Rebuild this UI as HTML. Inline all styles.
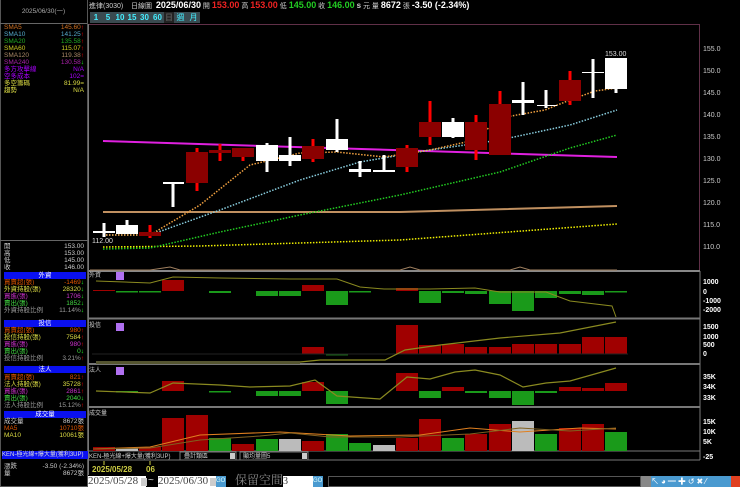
<!DOCTYPE html>
<html><head><meta charset="utf-8"><style>
*{margin:0;padding:0;box-sizing:border-box}
body{width:740px;height:487px;background:#000;overflow:hidden;position:relative;font-family:"Liberation Sans","Noto Sans CJK TC",sans-serif;color:#ccc}
.a{position:absolute;white-space:nowrap}
.r{position:absolute;left:4px;width:82px;height:7px;font-size:6.5px;line-height:7px}
.r span{position:absolute;right:2px}
.h{position:absolute;left:4px;width:82px;height:7px;background:#0a10f0;color:#fff;font-size:6.5px;line-height:7px;text-align:center}
.btn{position:absolute;top:12px;height:11px;background:#3a4a50;color:#4ef;font-size:8px;line-height:11px;text-align:center;font-weight:bold}
.s{font-family:"Liberation Serif","Noto Serif CJK SC",serif}
</style></head><body>
<div class="a" style="left:0;top:0;width:88px;height:487px;border:1px solid #555;border-top:none"></div>
<div class="a" style="left:0;top:0;width:87px;height:24px;border-bottom:1px solid #666;font-size:6.5px;color:#aaa;line-height:24px;text-align:center">2025/06/30(一)</div>
<div class="r" style="top:24px;color:#d07020">SMA5<span>145.60<b style="color:#f00">↑</b></span></div>
<div class="r" style="top:31px;color:#5ac">SMA10<span>141.25<b style="color:#f00">↑</b></span></div>
<div class="r" style="top:38px;color:#2a2">SMA20<span>135.58<b style="color:#f00">↑</b></span></div>
<div class="r" style="top:45px;color:#cc2">SMA60<span>115.07<b style="color:#f00">↑</b></span></div>
<div class="r" style="top:52px;color:#a86">SMA120<span>119.38<b style="color:#f00">↑</b></span></div>
<div class="r" style="top:59px;color:#a2a">SMA240<span>130.58<b style="color:#2f2">↓</b></span></div>
<div class="r" style="top:66px;color:#a0f">多方攻擊線<span>N/A</span></div>
<div class="r" style="top:73px;color:#a0f">空多成本<span>102=</span></div>
<div class="r" style="top:80px;color:#dd4">多空籌碼<span>81.99=</span></div>
<div class="r" style="top:87px;color:#dd4">趨勢<span>N/A</span></div>
<div class="a" style="left:0;top:240px;width:88px;border-top:1px solid #666"></div>
<div class="r" style="top:243px">開<span>153.00</span></div>
<div class="r" style="top:250px">高<span>153.00</span></div>
<div class="r" style="top:257px">低<span>145.00</span></div>
<div class="r" style="top:264px">收<span>146.00</span></div>
<div class="h" style="top:272px">外資</div>
<div class="r" style="top:279px;color:#d50">買賣超(張)<span>-1469<b style="color:#2f2">↓</b></span></div>
<div class="r" style="top:286px;color:#dd4">外資持股(張)<span>28320<b style="color:#2f2">↓</b></span></div>
<div class="r" style="top:293px;color:#c3c">買進(張)<span>1706<b style="color:#2f2">↓</b></span></div>
<div class="r" style="top:300px;color:#4d4">賣出(張)<span>1852<b style="color:#2f2">↓</b></span></div>
<div class="r" style="top:307px;color:#999">外資持股比例<span>11.14%<b style="color:#2f2">↓</b></span></div>
<div class="h" style="top:320px">投信</div>
<div class="r" style="top:327px;color:#d50">買賣超(張)<span>980<b style="color:#f00">↑</b></span></div>
<div class="r" style="top:334px;color:#dd4">投信持股(張)<span>7584<b style="color:#f00">↑</b></span></div>
<div class="r" style="top:341px;color:#c3c">買進(張)<span>980<b style="color:#f00">↑</b></span></div>
<div class="r" style="top:348px;color:#4d4">賣出(張)<span>0<b style="color:#2f2">↓</b></span></div>
<div class="r" style="top:355px;color:#999">投信持股比例<span>3.21%<b style="color:#f00">↑</b></span></div>
<div class="h" style="top:366px">法人</div>
<div class="r" style="top:374px;color:#d50">買賣超(張)<span>821<b style="color:#f00">↑</b></span></div>
<div class="r" style="top:381px;color:#dd4">法人持股(張)<span>35728<b style="color:#f00">↑</b></span></div>
<div class="r" style="top:388px;color:#c3c">買進(張)<span>2861<b style="color:#f00">↑</b></span></div>
<div class="r" style="top:395px;color:#4d4">賣出(張)<span>2040<b style="color:#2f2">↓</b></span></div>
<div class="r" style="top:402px;color:#999">法人持股比例<span>15.12%<b style="color:#f00">↑</b></span></div>
<div class="h" style="top:411px">成交量</div>
<div class="r" style="top:418px">成交量<span>8672張</span></div>
<div class="r" style="top:425px;color:#d50">MA5<span style="color:#d50">10710張</span></div>
<div class="r" style="top:432px;color:#dd4">MA10<span style="color:#dd4">10061張</span></div>
<div class="a" style="left:2px;top:451px;width:86px;height:8px;background:#0a10f0;color:#ddd;font-size:6px;line-height:8px">KEN-極光線+爆大量(獲利3UP)</div>
<div class="r" style="top:463px">漲跌<span>-3.50 (-2.34%)</span></div>
<div class="r" style="top:470px">量<span>8672張</span></div>
<div class="a" style="left:89px;top:1px;font-size:7px;line-height:9px;color:#ccc">進律(3030) &nbsp;&nbsp; 日線圖 &nbsp;<b style="font-size:9px;color:#fff">2025/06/30</b> 開 <b style="font-size:9px;color:#e22">153.00</b> 高 <b style="font-size:9px;color:#e22">153.00</b> 低 <b style="font-size:9px;color:#2c2">145.00</b> 收 <b style="font-size:9px;color:#2c2">146.00</b> <b style="font-size:8px">s</b> 元 量 <b style="font-size:9px;color:#fff">8672</b> 張 <b style="font-size:9px;color:#fff">-3.50 (-2.34%)</b></div>
<div class="btn" style="left:90px;width:12px">1</div>
<div class="btn" style="left:102px;width:12px">5</div>
<div class="btn" style="left:114px;width:12px">10</div>
<div class="btn" style="left:126px;width:12px">15</div>
<div class="btn" style="left:138px;width:13px">30</div>
<div class="btn" style="left:151px;width:13px">60</div>
<div class="btn" style="left:164px;width:10px;background:#222;color:#555">日</div>
<div class="btn" style="left:174px;width:13px;font-weight:normal">週</div>
<div class="btn" style="left:187px;width:13px;font-weight:normal">月</div>

<svg class="a" style="left:0;top:0" width="740" height="487" font-family="Liberation Sans" font-size="7">
<g stroke="#777" fill="none"><rect x="88.5" y="24.5" width="611" height="246" stroke="#603048"/>
<line x1="88" y1="271" x2="700" y2="271" stroke="#888" stroke-width="2"/>
<line x1="88" y1="318.5" x2="700" y2="318.5" stroke-width="2"/>
<line x1="88" y1="364" x2="700" y2="364" stroke-width="2"/>
<line x1="88" y1="407" x2="700" y2="407" stroke-width="2"/>
<line x1="88" y1="451" x2="700" y2="451"/><line x1="88" y1="460" x2="700" y2="460"/>
<line x1="88.5" y1="24" x2="88.5" y2="475"/><line x1="700" y1="271" x2="700" y2="460"/></g>
<g fill="#ccc" font-size="7"><text x="703" y="51">155.0</text><text x="703" y="73">150.0</text><text x="703" y="95">145.0</text><text x="703" y="117">140.0</text><text x="703" y="139">135.0</text><text x="703" y="161">130.0</text><text x="703" y="183">125.0</text><text x="703" y="205">120.0</text><text x="703" y="227">115.0</text><text x="703" y="249">110.0</text>
<g fill="#fff" font-weight="bold"><text x="703" y="284">1000</text><text x="703" y="294">0</text><text x="703" y="303">-1000</text><text x="703" y="312">-2000</text>
<text x="703" y="329">1500</text><text x="703" y="339">1000</text><text x="703" y="347">500</text><text x="703" y="356">0</text>
<text x="703" y="379">35K</text><text x="703" y="389">34K</text><text x="703" y="400">33K</text>
<text x="703" y="424">15K</text><text x="703" y="434">10K</text><text x="703" y="444">5K</text><text x="703" y="459">-25</text></g>
<text x="605" y="56" fill="#ddd">153.00</text><text x="92" y="243" fill="#ddd">112.00</text></g>
<polyline points="103,141 617,157" stroke="#e020e0" stroke-width="2" fill="none"/>
<polyline points="103,212 400,212 617,206" stroke="#c09060" stroke-width="2" fill="none"/>
<polyline points="103,247 200,246 400,240 617,224" stroke="#ee0" stroke-width="1.5" stroke-dasharray="1.5,1.5" fill="none"/>
<polyline points="103,249 150,248 220,232 300,215 400,195 500,172 570,148 617,135" stroke="#2c2" stroke-width="1.5" stroke-dasharray="1.5,1.5" fill="none"/>
<polyline points="103,235 150,235 220,210 300,180 360,162 430,150 500,140 570,125 617,110" stroke="#8cd" stroke-width="1.5" stroke-dasharray="1.5,1.5" fill="none"/>
<polyline points="103,235 150,235 200,205 250,165 300,153 337,152 384,157 430,150 475,140 500,118 545,110 570,100 595,91 617,88" stroke="#f0a040" stroke-width="1.5" stroke-dasharray="1.5,1.5" fill="none"/>
<g stroke-width="3">
<g stroke="#fff"><line x1="104" y1="223" x2="104" y2="237"/><line x1="127" y1="220" x2="127" y2="234"/><line x1="173" y1="183" x2="173" y2="207"/><line x1="267" y1="143" x2="267" y2="172"/><line x1="290" y1="137" x2="290" y2="166"/><line x1="337" y1="119" x2="337" y2="152"/><line x1="360" y1="161" x2="360" y2="177"/><line x1="384" y1="155" x2="384" y2="172"/><line x1="453" y1="118" x2="453" y2="138"/><line x1="523" y1="82" x2="523" y2="115"/><line x1="546" y1="90" x2="546" y2="108"/><line x1="593" y1="59" x2="593" y2="98"/><line x1="616" y1="58" x2="616" y2="93"/></g>
<g stroke="#f00"><line x1="150" y1="225" x2="150" y2="238"/><line x1="197" y1="148" x2="197" y2="191"/><line x1="220" y1="144" x2="220" y2="161"/><line x1="243" y1="148" x2="243" y2="161"/><line x1="313" y1="139" x2="313" y2="162"/><line x1="407" y1="145" x2="407" y2="172"/><line x1="430" y1="101" x2="430" y2="145"/><line x1="476" y1="115" x2="476" y2="160"/><line x1="500" y1="91" x2="500" y2="155"/><line x1="570" y1="71" x2="570" y2="105"/></g></g>
<g fill="#fff"><rect x="93" y="231" width="22" height="2"/><rect x="116" y="225" width="22" height="9"/><rect x="163" y="182" width="21" height="2"/><rect x="256" y="145" width="22" height="16"/><rect x="279" y="155" width="22" height="6"/><rect x="326" y="139" width="22" height="11"/><rect x="349" y="169" width="22" height="3"/><rect x="373" y="170" width="22" height="2"/><rect x="442" y="122" width="22" height="15"/><rect x="512" y="100" width="22" height="3"/><rect x="537" y="105" width="20" height="1"/><rect x="582" y="72" width="22" height="1"/><rect x="605" y="58" width="22" height="31"/></g>
<g fill="#8b0000"><rect x="139" y="232" width="22" height="4"/><rect x="186" y="152" width="22" height="31"/><rect x="209" y="150" width="22" height="3"/><rect x="232" y="148" width="22" height="9"/><rect x="302" y="146" width="22" height="13"/><rect x="396" y="148" width="22" height="19"/><rect x="419" y="122" width="22" height="15"/><rect x="465" y="122" width="22" height="28"/><rect x="489" y="104" width="22" height="51"/><rect x="559" y="80" width="22" height="21"/></g>
<polyline points="90,270 150,270 170,267 180,270 400,270 410,267 420,270 510,270 520,267 530,270 617,270" stroke="#a08060" fill="none"/>
<g fill="#1a9a1a"><rect x="116" y="291" width="22" height="1.5"/><rect x="139" y="291" width="22" height="1.5"/><rect x="209" y="291" width="22" height="2"/><rect x="256" y="291" width="22" height="5"/><rect x="279" y="291" width="22" height="5"/><rect x="326" y="291" width="22" height="14"/><rect x="349" y="291" width="22" height="1.5"/><rect x="419" y="291" width="22" height="12"/><rect x="442" y="291" width="22" height="2"/><rect x="465" y="291" width="22" height="3"/><rect x="489" y="291" width="22" height="13"/><rect x="512" y="291" width="22" height="20"/><rect x="535" y="291" width="22" height="7"/><rect x="559" y="291" width="22" height="3"/><rect x="582" y="291" width="22" height="4"/><rect x="605" y="291" width="22" height="1.5"/></g>
<g fill="#a00000"><rect x="93" y="290" width="22" height="1"/><rect x="162" y="280" width="22" height="11"/><rect x="302" y="285" width="22" height="6"/><rect x="396" y="288" width="22" height="3"/></g>
<polyline points="96,281 150,283 173,277 220,278 290,279 337,279 360,287 384,289 430,289 475,288 500,292 546,292 570,301 612,306 616,317" stroke="#8a8a20" fill="none"/>
<g fill="#a00000"><rect x="302" y="347" width="22" height="7"/><rect x="396" y="325" width="22" height="29"/><rect x="419" y="345" width="22" height="9"/><rect x="442" y="344" width="22" height="10"/><rect x="465" y="347" width="22" height="7"/><rect x="489" y="347" width="22" height="7"/><rect x="512" y="344" width="22" height="10"/><rect x="535" y="344" width="22" height="10"/><rect x="559" y="344" width="22" height="10"/><rect x="582" y="337" width="22" height="17"/><rect x="605" y="337" width="22" height="17"/></g>
<rect x="326" y="354" width="22" height="1.5" fill="#1a6a1a"/>
<line x1="92" y1="354" x2="628" y2="354" stroke="#222"/>
<polyline points="96,362 300,362 320,360 385,360 405,350 440,345 500,338 560,333 616,322" stroke="#8a8a20" stroke-width="1.2" fill="none"/>
<rect x="96" y="361" width="204" height="3" fill="#555530"/>
<g fill="#a00000"><rect x="162" y="381" width="22" height="10"/><rect x="302" y="382" width="22" height="9"/><rect x="396" y="373" width="22" height="18"/><rect x="442" y="387" width="22" height="4"/><rect x="559" y="387" width="22" height="4"/><rect x="582" y="388" width="22" height="3"/><rect x="605" y="383" width="22" height="8"/></g>
<g fill="#1a9a1a"><rect x="256" y="391" width="22" height="5"/><rect x="279" y="391" width="22" height="5"/><rect x="326" y="391" width="22" height="13"/><rect x="419" y="391" width="22" height="7"/><rect x="465" y="391" width="22" height="2"/><rect x="489" y="391" width="22" height="7"/><rect x="512" y="391" width="22" height="14"/><rect x="535" y="391" width="22" height="2"/><rect x="116" y="391" width="22" height="1.5"/><rect x="209" y="391" width="22" height="1.5"/></g>
<polyline points="96,391 150,393 173,383 220,385 250,387 290,386 315,380 337,396 380,399 407,377 430,379 455,372 475,370 500,375 523,387 546,383 570,381 616,368" stroke="#8a8a20" stroke-width="1.2" fill="none"/>
<g><rect x="93" y="447" width="22" height="4" fill="#a00000"/><rect x="116" y="448" width="22" height="3" fill="#bbb"/><rect x="139" y="447" width="22" height="4" fill="#a00000"/><rect x="162" y="418" width="22" height="33" fill="#a00000"/><rect x="186" y="415" width="22" height="36" fill="#a00000"/><rect x="209" y="438" width="22" height="13" fill="#1a9a1a"/><rect x="232" y="444" width="22" height="7" fill="#a00000"/><rect x="256" y="439" width="22" height="12" fill="#1a9a1a"/><rect x="279" y="439" width="22" height="12" fill="#bbb"/><rect x="302" y="441" width="22" height="10" fill="#a00000"/><rect x="326" y="434" width="22" height="17" fill="#1a9a1a"/><rect x="349" y="443" width="22" height="8" fill="#1a9a1a"/><rect x="373" y="445" width="22" height="6" fill="#bbb"/><rect x="396" y="438" width="22" height="13" fill="#a00000"/><rect x="419" y="419" width="22" height="32" fill="#a00000"/><rect x="442" y="438" width="22" height="13" fill="#1a9a1a"/><rect x="465" y="434" width="22" height="17" fill="#a00000"/><rect x="489" y="424" width="22" height="27" fill="#a00000"/><rect x="512" y="421" width="22" height="30" fill="#bbb"/><rect x="535" y="434" width="22" height="17" fill="#1a9a1a"/><rect x="559" y="428" width="22" height="23" fill="#a00000"/><rect x="582" y="424" width="22" height="27" fill="#a00000"/><rect x="605" y="432" width="22" height="19" fill="#1a9a1a"/></g>
<polyline points="93,449 150,447 200,435 280,432 350,436 420,435 470,428 520,432 580,428 616,429" stroke="#e08020" fill="none"/>
<polyline points="93,449 150,448 200,440 260,436 290,433 330,437 400,437 470,434 520,428 570,431 616,428" stroke="#806020" fill="none"/>
<g fill="#ccc" font-size="6"><text x="89" y="277">外資</text><text x="89" y="327">投信</text><text x="89" y="372">法人</text><text x="89" y="415">成交量</text></g>
<g fill="#b070f0"><rect x="116" y="272" width="8" height="8"/><rect x="116" y="323" width="8" height="8"/><rect x="116" y="367" width="8" height="8"/></g>
<text x="89" y="458" font-size="6" fill="#ccc">KEN-極光線+爆大量(獲利3UP)</text>
<rect x="180" y="452" width="56" height="8" fill="#000" stroke="#777"/><text x="184" y="458" font-size="6" fill="#ccc">疊計類區</text><rect x="230" y="453" width="5" height="6" fill="#ccc"/>
<rect x="240" y="452" width="68" height="8" fill="#000" stroke="#777"/><text x="243" y="458" font-size="6" fill="#ccc">顯均量圖5</text><rect x="302" y="453" width="5" height="6" fill="#ccc"/>
<line x1="104" y1="461" x2="104" y2="465" stroke="#cc4"/><line x1="150" y1="461" x2="150" y2="465" stroke="#cc4"/>
<g fill="#cc4" font-size="8" font-weight="bold"><text x="92" y="472">2025/05/28</text><text x="146" y="472">06</text></g>
</svg>
<div class="a s" style="left:88px;top:476px;width:58px;height:11px;background:#fff;color:#444;font-size:11px;line-height:11px">2025/05/28</div>
<div class="a" style="left:141px;top:478px;width:6px;height:8px;background:#ccc"></div>
<div class="a" style="left:148px;top:475px;color:#ddd;font-size:10px">~</div>
<div class="a s" style="left:158px;top:476px;width:58px;height:11px;background:#fff;color:#444;font-size:11px;line-height:11px">2025/06/30</div>
<div class="a" style="left:210px;top:478px;width:6px;height:8px;background:#ccc"></div>
<div class="a" style="left:216px;top:476px;width:10px;height:11px;background:#4a9ad0;color:#dff;font-size:6px;line-height:11px">GO</div>
<div class="a s" style="left:235px;top:474px;color:#888;font-size:12px;line-height:13px">保留空間</div>
<div class="a s" style="left:283px;top:476px;width:30px;height:11px;background:#fff;color:#333;font-size:10px;line-height:11px">3</div>
<div class="a" style="left:313px;top:476px;width:10px;height:11px;background:#4a9ad0;color:#dff;font-size:6px;line-height:11px">GO</div>
<div class="a" style="left:328px;top:476px;width:313px;height:11px;border:1px solid #555;background:#000"></div>
<div class="a" style="left:641px;top:476px;width:10px;height:11px;background:#888"></div>
<div class="a" style="left:651px;top:476px;width:80px;height:11px;background:#4a9ad0;color:#fff;font-size:8px;line-height:11px;letter-spacing:2px">↖◕━✚↺✖⁄</div>
<div class="a" style="left:731px;top:476px;width:9px;height:11px;background:#e04020"></div>
</body></html>
